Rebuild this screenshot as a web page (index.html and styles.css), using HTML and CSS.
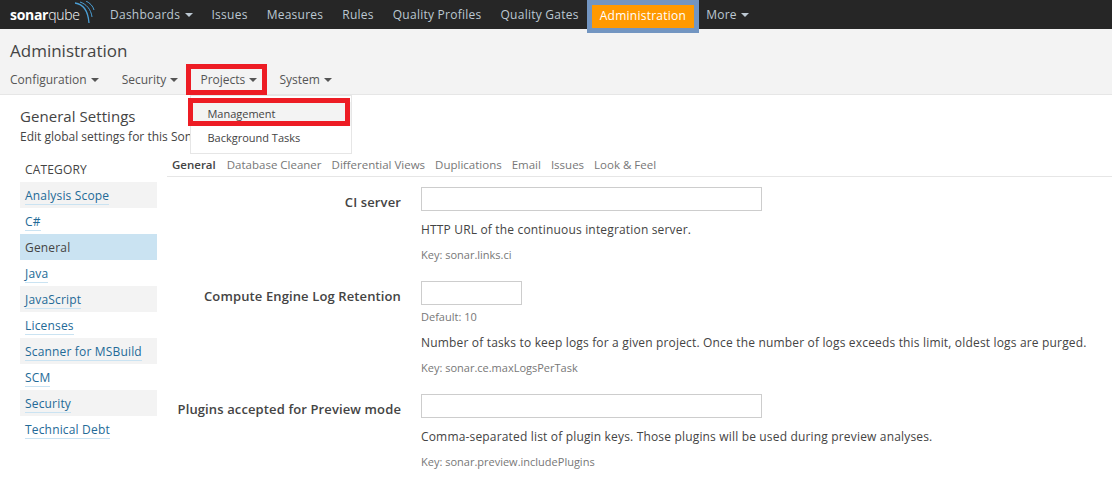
FILE: index.html
```html
<!DOCTYPE html>
<html lang="en">
<head>
<meta charset="UTF-8">
<title>Administration</title>
<link rel="stylesheet" href="styles.css">
</head>
<body>
<div class="navbar">
  <a class="logo"><b>sonar</b>qube
    <svg class="waves" width="22" height="24" viewBox="0 0 22 24" fill="none" stroke="#4b9fd5">
      <path d="M1 2c8 1 13 7 14 20" stroke-width="1.3"/>
      <path d="M6 1c6 2 11 7 12 15" stroke-width="1"/>
      <path d="M12 0c4 2 7 5 8 9" stroke-width="1"/>
    </svg>
  </a>
  <a class="nav-item">Dashboards <i class="caret"></i></a>
  <a class="nav-item">Issues</a>
  <a class="nav-item">Measures</a>
  <a class="nav-item">Rules</a>
  <a class="nav-item">Quality Profiles</a>
  <a class="nav-item">Quality Gates</a>
  <a class="nav-item nav-active"><span>Administration</span></a>
  <a class="nav-item">More <i class="caret"></i></a>
</div>

<div class="subheader">
  <h1>Administration</h1>
  <div class="submenu">
    <a class="sub-item">Configuration <i class="caret"></i></a>
    <a class="sub-item">Security <i class="caret"></i></a>
    <a class="sub-item sub-open">Projects <i class="caret"></i>
      <div class="dropdown">
        <div class="drop-item drop-marked">Management</div>
        <div class="drop-item">Background Tasks</div>
      </div>
    </a>
    <a class="sub-item">System <i class="caret"></i></a>
  </div>
</div>

<div class="page">
  <h2>General Settings</h2>
  <p class="page-desc">Edit global settings for this Sona</p>
  <div class="columns">
    <div class="sidebar">
      <div class="side-title">CATEGORY</div>
      <div class="side-row"><a>Analysis Scope</a></div>
      <div class="side-row"><a>C#</a></div>
      <div class="side-row side-active">General</div>
      <div class="side-row"><a>Java</a></div>
      <div class="side-row"><a>JavaScript</a></div>
      <div class="side-row"><a>Licenses</a></div>
      <div class="side-row"><a>Scanner for MSBuild</a></div>
      <div class="side-row"><a>SCM</a></div>
      <div class="side-row"><a>Security</a></div>
      <div class="side-row"><a>Technical Debt</a></div>
    </div>
    <div class="main">
      <div class="tabs">
        <b>General</b>
        <span>Database Cleaner</span>
        <span>Differential Views</span>
        <span>Duplications</span>
        <span>Email</span>
        <span>Issues</span>
        <span>Look &amp; Feel</span>
      </div>
      <div class="setting">
        <label>CI server</label>
        <div class="field">
          <input class="wide" type="text">
          <p class="desc">HTTP URL of the continuous integration server.</p>
          <p class="key">Key: sonar.links.ci</p>
        </div>
      </div>
      <div class="setting">
        <label>Compute Engine Log Retention</label>
        <div class="field">
          <input class="short" type="text">
          <p class="default">Default: 10</p>
          <p class="desc desc-tight">Number of tasks to keep logs for a given project. Once the number of logs exceeds this limit, oldest logs are purged.</p>
          <p class="key">Key: sonar.ce.maxLogsPerTask</p>
        </div>
      </div>
      <div class="setting">
        <label>Plugins accepted for Preview mode</label>
        <div class="field">
          <input class="wide" type="text">
          <p class="desc">Comma-separated list of plugin keys. Those plugins will be used during preview analyses.</p>
          <p class="key">Key: sonar.preview.includePlugins</p>
        </div>
      </div>
    </div>
  </div>
</div>
</body>
</html>
```

FILE: styles.css
```css
body {
  margin: 0;
  font-family: "Open Sans", "Noto Sans", sans-serif;
  font-size: 12px;
  letter-spacing: 0.17px;
  color: #444;
  background: #fff;
  overflow: hidden;
}
p {
  margin: 0;
}
.caret {
  display: inline-block;
  width: 0;
  height: 0;
  margin-left: 1px;
  vertical-align: 2px;
  border-left: 4px solid transparent;
  border-right: 4px solid transparent;
  border-top: 4px solid currentColor;
}

.navbar {
  display: flex;
  height: 29px;
  padding-left: 10px;
  background: #262626;
}
.logo {
  display: block;
  position: relative;
  width: 100px;
  color: #fff;
  font-size: 14px;
  font-weight: 300;
  line-height: 29px;
  letter-spacing: -0.3px;
}
.logo b {
  font-weight: 700;
}
.waves {
  position: absolute;
  left: 64px;
  top: 1px;
}
.nav-item {
  margin-right: 19px;
  color: #bcc8d2;
  font-size: 12px;
  letter-spacing: 0.25px;
  line-height: 29px;
  white-space: nowrap;
}
.nav-active {
  height: 33px;
  margin: 0 7px 0 -11px;
  box-sizing: border-box;
  border: 5px solid #7295c1;
  border-top: 0;
  background: #7295c1;
  position: relative;
}
.nav-active span {
  display: block;
  height: 23px;
  margin-top: 5px;
  padding: 0 8px;
  background: #ff9900;
  color: #fff;
  line-height: 22px;
}

.subheader {
  height: 65px;
  padding-left: 10px;
  background: #f3f3f3;
  border-bottom: 1px solid #e6e6e6;
}
.subheader h1 {
  margin: 0;
  padding-top: 10px;
  font-size: 17px;
  font-weight: 400;
  letter-spacing: 0;
  line-height: 24px;
  color: #444;
}
.submenu {
  display: flex;
  margin-top: 7px;
}
.sub-item {
  position: relative;
  margin-right: 22px;
  font-size: 12px;
  letter-spacing: 0;
  line-height: 20px;
  color: #555;
  white-space: nowrap;
}
.sub-item:first-child {
  margin-right: 23px;
}
.sub-open::before {
  content: "";
  position: absolute;
  left: -14px;
  right: -10px;
  top: -6px;
  height: 31px;
  box-sizing: border-box;
  border: 5px solid #ed1c24;
}
.dropdown {
  position: absolute;
  left: -10px;
  top: 25px;
  z-index: 5;
  width: 162px;
  height: 59px;
  box-sizing: border-box;
  padding-top: 6px;
  background: #fff;
  border: 1px solid #e6e6e6;
}
.drop-item {
  position: relative;
  padding-left: 16px;
  height: 24px;
  font-size: 11px;
  letter-spacing: 0;
  line-height: 24px;
  color: #444;
}
.drop-marked {
  background: #f3f3f3;
}
.drop-marked::before {
  content: "";
  position: absolute;
  left: -3px;
  top: -4px;
  width: 162px;
  height: 28px;
  box-sizing: border-box;
  border: 5px solid #ed1c24;
}

.page {
  padding: 11px 0 0 20px;
}
.page h2 {
  margin: 0;
  font-size: 15px;
  font-weight: 400;
  letter-spacing: 0.05px;
  line-height: 20px;
  color: #444;
}
.page-desc {
  margin-top: 3px;
  letter-spacing: 0;
  line-height: 16px;
  white-space: nowrap;
}
.columns {
  display: flex;
  margin-top: 11px;
}
.sidebar {
  width: 137px;
  flex-shrink: 0;
}
.side-title {
  height: 26px;
  padding-left: 5px;
  line-height: 28px;
}
.side-row {
  height: 26px;
  padding-left: 5px;
  line-height: 28px;
  color: #236a97;
}
.side-row:nth-child(even) {
  background: #f3f3f3;
}
.side-row a {
  border-bottom: 1px solid #cae3f2;
}
.side-row.side-active {
  background: #cae3f2;
  color: #444;
}

.main {
  flex: 1;
  margin-left: 10px;
}
.tabs {
  display: flex;
  gap: 10px;
  height: 20px;
  padding-left: 5px;
  border-bottom: 1px solid #e6e6e6;
  font-size: 11.5px;
  letter-spacing: 0;
  line-height: 17px;
  color: #777;
  white-space: nowrap;
}
.tabs b {
  margin-right: 1px;
  font-weight: 600;
  color: #444;
}
.setting {
  display: flex;
  margin-top: 10px;
  margin-bottom: 18px;
}
.setting label {
  width: 234px;
  flex-shrink: 0;
  padding-top: 6px;
  font-size: 13px;
  font-weight: 600;
  letter-spacing: 0.12px;
  line-height: 18px;
  text-align: right;
  white-space: nowrap;
}
.field {
  margin-left: 20px;
  white-space: nowrap;
}
.field input {
  display: block;
  box-sizing: border-box;
  height: 24px;
  padding: 0;
  background: #fff;
  border: 1px solid #cdcdcd;
}
.wide {
  width: 341px;
}
.short {
  width: 101px;
}
.desc {
  margin-top: 10px;
  line-height: 18px;
}
.desc-tight {
  margin-top: 9px;
}
.default {
  margin-top: 4px;
  font-size: 11px;
  letter-spacing: 0;
  line-height: 16px;
  color: #777;
}
.key {
  margin-top: 8px;
  font-size: 11px;
  letter-spacing: 0;
  line-height: 16px;
  color: #777;
}
```
